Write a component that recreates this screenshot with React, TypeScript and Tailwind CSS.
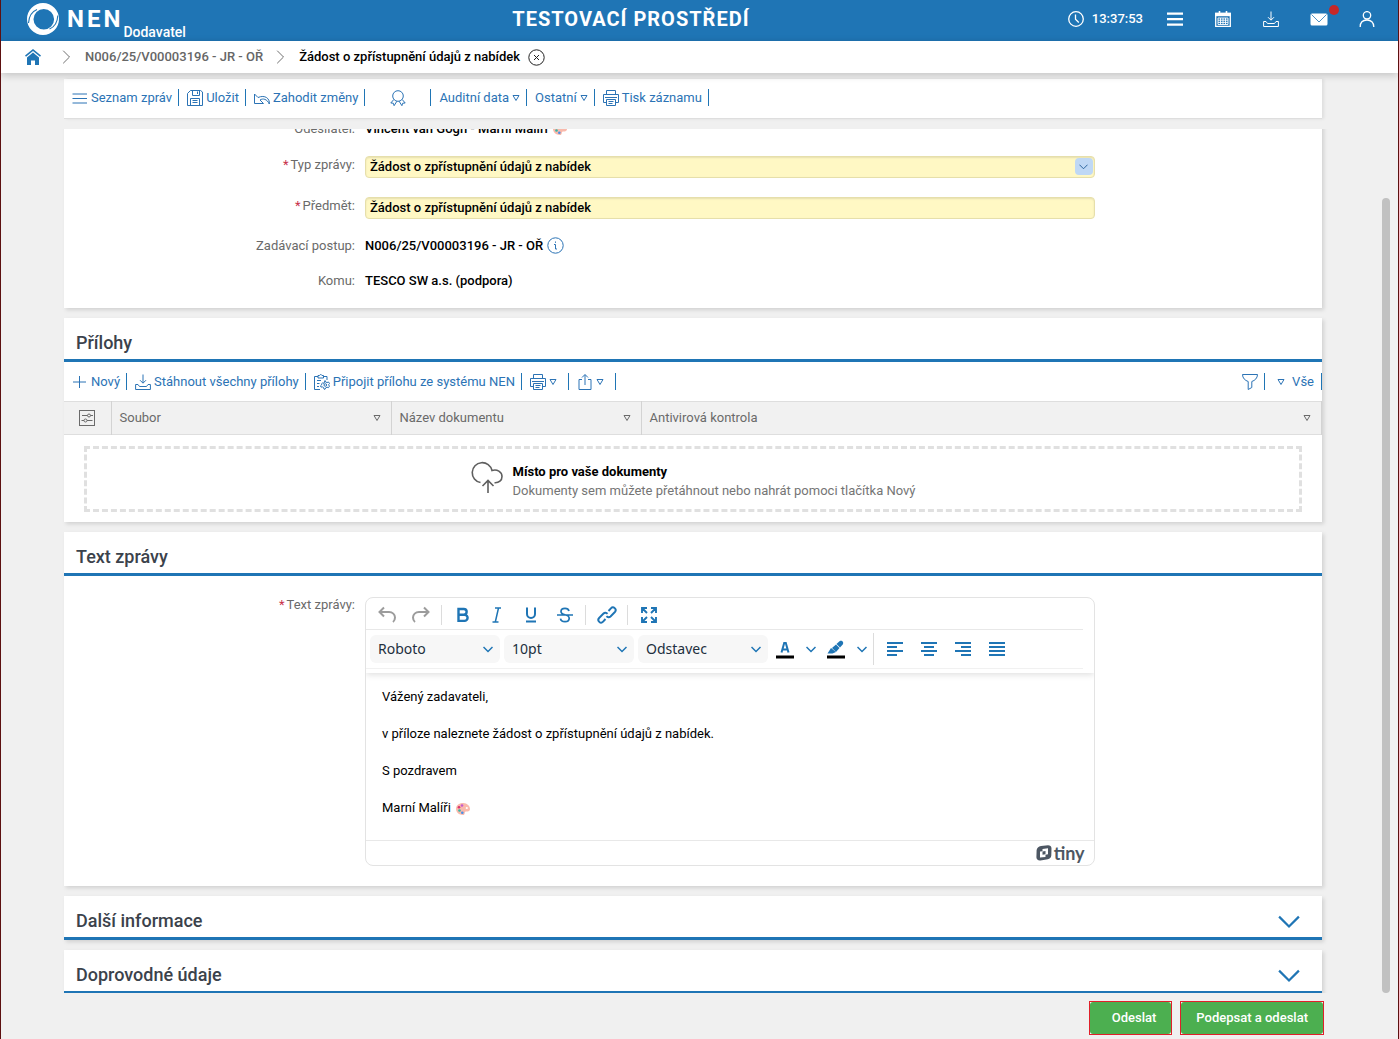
import { useEffect, useRef, useState } from "react";
import type { ReactNode } from "react";
import clsx from "clsx";

type IconProps = { className?: string };

const line = {
  viewBox: "0 0 16 16",
  fill: "none",
  stroke: "currentColor",
  strokeWidth: 1,
  "aria-hidden": true,
} as const;

/* Icons */

const Triangle = ({ className = "" }: IconProps) => (
  <svg viewBox="0 0 8 8" fill="none" stroke="currentColor" className={clsx("h-2 w-2 shrink-0", className)} aria-hidden>
    <path d="M1 1.5h6L4 6.5z" />
  </svg>
);

const Chevron = ({ className = "" }: IconProps) => (
  <svg viewBox="0 0 10 10" fill="none" stroke="currentColor" className={className} aria-hidden>
    <path d="M0.5 3 5 7.5 9.5 3" />
  </svg>
);

const NenLogo = () => (
  <svg viewBox="0 0 32 32" className="h-8 w-8" aria-hidden>
    <path
      fill="#fff"
      fillRule="evenodd"
      d="M16 0a16 16 0 1 1 0 32 16 16 0 0 1 0-32zm.8 6a10.300 10.300 0 1 0 0 20.600 10.300 10.300 0 0 0 0-20.600z"
    />
    <path d="M1.500 20C2 13 5 8.500 10 6.500" fill="none" stroke="#1f75b5" strokeWidth="1.100" />
    <path d="M30.800 12.500c-.3 7-3.500 11.500-8.300 13.500" fill="none" stroke="#1f75b5" strokeWidth="1.100" />
  </svg>
);

const HomeIcon = () => (
  <svg viewBox="0 0 16 16" className="h-4 w-4" fill="#1f75b5" aria-hidden>
    <path d="M8 0 0 6.500l1 1.200L8 2l7 5.700 1-1.200z" />
    <path d="M8 3.600 2 8.500V16h4v-4.500h4V16h4V8.500z" />
  </svg>
);

const ClockIcon = () => (
  <svg {...line} className="h-4 w-4">
    <circle cx="8" cy="8" r="7.300" strokeWidth="1.300" />
    <path d="M7.500 3.500v4.700l3.300 3.300" strokeWidth="1.300" />
  </svg>
);

const MenuIcon = () => (
  <svg viewBox="0 0 16 16" className="h-4 w-4" fill="currentColor" aria-hidden>
    <path d="M0 1.500h16v2.200H0zM0 7h16v2.200H0zM0 12.500h16v2.200H0z" />
  </svg>
);

const CalendarIcon = () => (
  <svg {...line} className="h-4 w-4">
    <path d="M.7 2.500h14.600v12.800H.7z" strokeWidth="1.300" />
    <path d="M0 1.800h16v3.400H0z" fill="currentColor" stroke="none" />
    <path d="M4.500 0v3.500M11.500 0v3.500" strokeWidth="1.600" />
    <path d="M3 7h10v6.500H3zM3 9.200h10M3 11.400h10M5.500 7v6.500M8 7v6.500M10.500 7v6.500" strokeWidth=".9" />
  </svg>
);

const DownloadIcon = () => (
  <svg {...line} className="h-4 w-4 shrink-0">
    <path d="M8 .5v8.500M5 6.200 8 9.200l3-3" />
    <path d="M3 10.500H.6v5h14.800v-5H13M3 10.500l1.500 2h7l1.500-2" />
  </svg>
);

const MailIcon = () => (
  <svg viewBox="0 0 18 16" className="h-4 w-[18px]" aria-hidden>
    <rect x=".5" y="2.500" width="17" height="12" rx="1.500" fill="#fff" />
    <path d="m1.500 3.500 7.500 7.500 7.500-7.500" fill="none" stroke="#1f75b5" strokeWidth=".8" />
  </svg>
);

const UserIcon = () => (
  <svg {...line} className="h-4 w-4">
    <circle cx="8" cy="4.300" r="3.700" strokeWidth="1.300" />
    <path d="M1.200 16c0-4.500 2.800-7 6.800-7s6.800 2.500 6.800 7" strokeWidth="1.300" />
  </svg>
);

const ListIcon = () => (
  <svg {...line} className="h-4 w-4 shrink-0">
    <path d="M.5 4h14.500M.5 8.500h14.500M.5 13h14.500" />
  </svg>
);

const SaveIcon = () => (
  <svg {...line} className="h-4 w-4 shrink-0">
    <path d="M3.500.5h10l2 1.500v13.500H.5V3.500z" />
    <path d="M5.500.5v5h7v-5M10.500 1.500v2.500M3.500 15.500V8.500h9v7M5.500 10.500h5M5.500 12.500h5" />
  </svg>
);

const UndoCardIcon = () => (
  <svg {...line} className="h-4 w-4 shrink-0">
    <path d="M.5 4v9.500h9l-3.500-3.500C9 8 13 9 15.300 14c.7-5.500-4.300-9.500-11.300-6.500z" />
  </svg>
);

const SealIcon = () => (
  <svg {...line} className="h-4 w-4 shrink-0">
    <circle cx="8" cy="6" r="5.300" />
    <path d="M3.800 9.500.8 13l2.500.2.800 2.500 2.800-4.500M12.200 9.500l3 3.500-2.500.2-.8 2.500-2.800-4.500" />
  </svg>
);

const PrintIcon = () => (
  <svg {...line} className="h-4 w-4 shrink-0">
    <path d="M3.500 4.500v-4h9v4M3.500 12.500h-3v-8h15v8h-3M2 7.500h12" />
    <path d="M3.500 9.500h9v6h-9zM5.500 11.500h5M5.500 13.500h4" />
  </svg>
);

const PlusIcon = () => (
  <svg {...line} className="h-4 w-4 shrink-0">
    <path d="M7.500 2v12M1 8h13" />
  </svg>
);

const ClipboardIcon = () => (
  <svg {...line} className="h-4 w-4 shrink-0">
    <path d="M6 15.500H.5v-13H4M9.500 2.500H13V6M4 1.500h1.500C6 .2 7.500.2 8 1.500h1.500V4H4z" />
    <path d="M3 6.500h4M3 9.500h2.500M3 12.500h2" />
    <path d="m11 6.500.5 1.500 1.500.5 1.500-.5 1 1.500-1 1.300 1 1.300-1 1.500-1.500-.4-1.300.6-.7 1.500-1-.2-.5-1.700-1.200-.5-1.300.2-.5-1.300 1.200-1-.2-1 1-.8 1.500.3z" />
    <circle cx="11.300" cy="11" r="1.300" />
  </svg>
);

const ShareIcon = () => (
  <svg {...line} className="h-4 w-4 shrink-0">
    <path d="M5 5.500H2v10h12v-10h-3M8 11V.8M5 3.500 8 .5l3 3" />
  </svg>
);

const FilterIcon = () => (
  <svg {...line} className="h-4 w-4 shrink-0">
    <path d="M.5.500h15C15.500 4 13 6.500 9.800 7.500v6L6.200 15.500v-8C3 6.500.5 4 .5.500z" />
  </svg>
);

const SlidersIcon = () => (
  <svg {...line} className="h-4 w-4">
    <rect x=".5" y=".5" width="15" height="15" />
    <path d="M3 5.500h5.500M11.500 5.500H14M2.500 10.500H5M8 10.500h5.500" />
    <circle cx="10" cy="5.500" r="1.500" />
    <circle cx="6.500" cy="10.500" r="1.500" />
  </svg>
);

const CloudIcon = () => (
  <svg viewBox="0 0 32 32" className="h-8 w-8 text-[#5f5f5f]" fill="none" stroke="currentColor" strokeWidth="1.600" aria-hidden>
    <path d="M9.500 21.500a10 10 0 1 1 11.500-12c5-1.800 10 1.500 10 6 0 4-3 6.500-7.500 6.200" />
    <path d="M17 32V20M11.500 25l5.500-5.500L22.500 25" />
  </svg>
);

const Palette = () => (
  <svg viewBox="0 0 14 12" className="ml-[2px] inline h-3 w-[14px]" role="img" aria-label="paleta">
    <path d="M6 0C2.500.3 0 3 0 6s3 6 7 6c2 0 1.500-2 2-3s5 .5 5-3S10.500-.3 6 0z" fill="#f9b9ab" />
    <circle cx="6" cy="2.500" r="1.300" fill="#c45ad0" />
    <circle cx="3" cy="4.300" r="1.300" fill="#d8366f" />
    <circle cx="3.500" cy="7.500" r="1.300" fill="#35b5a5" />
    <circle cx="6.300" cy="9.700" r="1.300" fill="#4a90e8" />
    <circle cx="10.800" cy="5" r="1.100" fill="#fff" />
  </svg>
);

const TinyLogo = () => (
  <svg viewBox="0 0 16 16" className="h-4 w-4" aria-hidden>
    <path
      fill="#4d5763"
      fillRule="evenodd"
      d="M5 1 12 .3c2 0 3.500 1.200 3.500 3.200l-.2 7c-.2 2-1.500 3.500-3.500 3.800L4.500 15.500C2 15.800.4 14.500.4 12.300l.2-7C.8 3 2.500 1.300 5 1zm1.500 3L12 3.300v6L9.500 9.700v2.200L4 12.500V6.500l2.500-.3z"
    />
    <path d="M6.500 6.500 9.500 6v3.200l-3 .5z" fill="#4d5763" />
  </svg>
);

/* Toolbar pieces */

type ToolProps = { icon?: ReactNode; children?: ReactNode; menu?: boolean; label?: string; className?: string };

function Tool({ icon, children, menu, label, className = "pl-2 pr-[6px]" }: ToolProps) {
  return (
    <button
      type="button"
      aria-label={label}
      className={clsx("flex h-[17px] items-center gap-[3px] border-r border-[#1f75b5] whitespace-nowrap text-[#2b73b5]", className)}
    >
      {icon}
      {children}
      {menu && <Triangle />}
    </button>
  );
}

function Card({ children }: { children: ReactNode }) {
  return <section className="mb-[10px] bg-white shadow-[2px_2px_4px_rgba(0,0,0,.13)]">{children}</section>;
}

function CardTitle({ children, collapsed }: { children: ReactNode; collapsed?: boolean }) {
  return (
    <div className="flex h-11 items-center justify-between border-b-3 border-[#1f75b5] pt-2 pr-[22px] pl-3">
      <h2 className="text-lg font-medium text-[#3b424b]">{children}</h2>
      {collapsed && (
        <button type="button" aria-label="Rozbalit" className="text-[#1f75b5]">
          <Chevron className="h-[22px] w-[22px]" />
        </button>
      )}
    </div>
  );
}

type RowProps = { label: string; id?: string; required?: boolean; children: ReactNode; className?: string };

function Row({ label, id, required, children, className = "h-[35px] items-center" }: RowProps) {
  return (
    <div className={clsx("flex", className)}>
      <label htmlFor={id} className={clsx("w-[301px] shrink-0 pr-[10px] text-right leading-4 text-[#6a6a6a]", required && "pb-1")}>
        {required && <span className="mr-[2px] text-[#c8324a]">*</span>}
        {label}
      </label>
      <div className="w-[58%]">{children}</div>
    </div>
  );
}

/* Editor */

type EditorIconProps = { label: string; children: ReactNode; muted?: boolean };

function EditorButton({ label, children, muted }: EditorIconProps) {
  return (
    <button
      type="button"
      aria-label={label}
      className={clsx("flex h-7 w-[34px] items-center justify-center", muted ? "text-[#9c9c9c]" : "text-[#1f75b5]")}
    >
      <svg viewBox="0 0 24 24" className="h-6 w-6" fill="none" stroke="currentColor" strokeWidth="2" aria-hidden>
        {children}
      </svg>
    </button>
  );
}

function EditorSelect({ label, value }: { label: string; value: string }) {
  return (
    <div className="relative">
      <select
        aria-label={label}
        className="h-7 w-[130px] appearance-none rounded-md bg-[#f7f7f7] px-2 font-['Noto_Sans',sans-serif] text-sm text-[#222f3e]"
      >
        <option>{value}</option>
      </select>
      <Chevron className="pointer-events-none absolute top-[9px] right-[7px] h-[10px] w-[10px] stroke-[1.5] text-[#1f75b5]" />
    </div>
  );
}

function SplitArrow({ label }: { label: string }) {
  return (
    <button type="button" aria-label={label} className="flex w-[17px] items-center justify-center text-[#1f75b5]">
      <Chevron className="h-[10px] w-[10px] stroke-[1.5]" />
    </button>
  );
}

function AlignIcon({ widths }: { widths: [number, number][] }) {
  return (
    <>
      {widths.map(([x, w], i) => (
        <path key={i} d={`M${x} ${6 + i * 4}h${w}`} />
      ))}
    </>
  );
}

const group = "flex items-center border-r border-[#dcdcdc] pl-1 pr-[3px]";

function Editor() {
  return (
    <div className="overflow-hidden rounded-lg border border-[#e3e3e3]">
      <div className="pb-1 shadow-[0_2px_6px_rgba(0,0,0,.12)]">
        <div className="mr-[11px] flex h-8 items-center border-b border-[#e8e8e8] pt-1 pb-[1px]">
          <div className={clsx(group, "h-5")}>
            <EditorButton label="Zpět" muted>
              <path d="M9 4.500 4.500 9 9 13.500M5 9h9c3.500 0 6 2.500 6 5.500 0 2-.8 3.500-2 4.500" />
            </EditorButton>
            <EditorButton label="Znovu" muted>
              <path d="M15 4.500 19.500 9 15 13.500M19 9h-9c-3.500 0-6 2.500-6 5.500 0 2 .8 3.500 2 4.500" />
            </EditorButton>
          </div>
          <div className={clsx(group, "h-5")}>
            <EditorButton label="Tučné">
              <path d="M7.500 6h5.300a2.800 2.800 0 0 1 0 5.700H7.500zM7.500 11.700h6a3.100 3.100 0 0 1 0 6.200h-6z" strokeWidth="2.400" />
            </EditorButton>
            <EditorButton label="Kurzíva">
              <path d="M10 5h6M7.500 19h6M13.500 5 10.300 19" strokeWidth="1.500" />
            </EditorButton>
            <EditorButton label="Podtržené">
              <path d="M8 4.500V11a4 4 0 0 0 8 0V4.500M7 18.500h10" />
            </EditorButton>
            <EditorButton label="Přeškrtnuté">
              <path d="M16 8c-.4-1.800-2-2.700-4-2.700S8 6.300 8 8.500s2 2.800 4 3.300 4.200 1.200 4.200 3.500-2 3.400-4.200 3.400-4.200-1-4.500-3M4 12h16" strokeWidth="1.700" />
            </EditorButton>
          </div>
          <div className={clsx(group, "h-5")}>
            <EditorButton label="Odkaz">
              <path d="m10.500 16-2.400 2.700a2.700 2.700 0 0 1-4-3.700L8.500 10.500a2.700 2.700 0 0 1 4 .3M13.500 8l2.400-2.700a2.700 2.700 0 0 1 4 3.700L15.500 13.500a2.700 2.700 0 0 1-4-.3" strokeWidth="1.900" />
            </EditorButton>
          </div>
          <div className="pl-1">
            <EditorButton label="Celá obrazovka">
              <path d="M5 10V5h5M14 5h5v5M19 14v5h-5M10 19H5v-5M5 5l5 5M19 5l-5 5M19 19l-5-5M5 19l5-5" strokeWidth="1.900" />
            </EditorButton>
          </div>
        </div>

        <div className="mr-[11px] flex h-[39px] items-center border-b border-[#f1f1f1]">
          <div className={clsx(group, "h-8")}>
            <div className="flex gap-1">
              <EditorSelect label="Písmo" value="Roboto" />
              <EditorSelect label="Velikost" value="10pt" />
              <EditorSelect label="Formát" value="Odstavec" />
            </div>
            <EditorButton label="Barva textu">
              <path d="m8.500 15.500 2.700-9.500h1.600l2.700 9.500M9.500 12.500h5" />
              <path d="M3 20h18" stroke="#000" strokeWidth="3" />
            </EditorButton>
            <SplitArrow label="Vybrat barvu textu" />
            <EditorButton label="Barva pozadí">
              <path d="M3.500 16.500 7 11l5 4-3.500 1.500z" fill="currentColor" stroke="none" />
              <path d="m8 11 4-3.500 3.500 3.500-3.500 4z" fill="currentColor" stroke="none" />
              <path d="m12.500 7 3-2.800c2.300-1.500 4.800 1 3.200 3.200L16 10.500z" fill="currentColor" stroke="none" />
              <path d="M3 20h18" stroke="#000" strokeWidth="3" />
            </EditorButton>
            <SplitArrow label="Vybrat barvu pozadí" />
          </div>
          <div className="flex pl-1">
            <EditorButton label="Zarovnat vlevo">
              <AlignIcon widths={[[4, 16], [4, 10], [4, 16], [4, 10]]} />
            </EditorButton>
            <EditorButton label="Na střed">
              <AlignIcon widths={[[4, 16], [7, 10], [4, 16], [7, 10]]} />
            </EditorButton>
            <EditorButton label="Zarovnat vpravo">
              <AlignIcon widths={[[4, 16], [10, 10], [4, 16], [10, 10]]} />
            </EditorButton>
            <EditorButton label="Do bloku">
              <AlignIcon widths={[[4, 16], [4, 16], [4, 16], [4, 16]]} />
            </EditorButton>
          </div>
        </div>
      </div>

      <div className="h-[167px] space-y-[17px] px-4 pt-[14px] leading-5 text-black">
        <p>Vážený zadavateli,</p>
        <p>v příloze naleznete žádost o zpřístupnění údajů z nabídek.</p>
        <p>S pozdravem</p>
        <p>
          Marní Malíři <Palette />
        </p>
      </div>

      <div className="flex h-[25px] items-center justify-end gap-[2px] border-t border-[#e8e8e8] pr-[9px] text-[#4d5763]">
        <TinyLogo />
        <span className="font-[Lato,sans-serif] text-lg leading-4 font-bold">tiny</span>
      </div>
    </div>
  );
}

const columns = [
  { name: "Soubor", width: "w-[280px]" },
  { name: "Název dokumentu", width: "w-[250px]" },
  { name: "Antivirová kontrola", width: "" },
];

const field = "h-[22px] w-full rounded border border-[#e6dfab] bg-[#fff8c4] px-1 font-medium text-black shadow-[inset_0_1px_2px_rgba(0,0,0,.1)]";

export default function App() {
  const scroller = useRef<HTMLDivElement>(null);
  const [subject, setSubject] = useState("Žádost o zpřístupnění údajů z nabídek");

  useEffect(() => {
    if (scroller.current) scroller.current.scrollTop = 28;
  }, []);

  return (
    <div className="flex h-screen flex-col overflow-hidden border-x border-[#5c1010] bg-[#f0f0f0] font-[Roboto,sans-serif] text-[13px] leading-5">
      {/* Header */}
      <header className="flex h-[41px] shrink-0 items-center justify-between bg-[#1f75b5] pr-[7px] pb-1 pl-[26px] text-white">
        <div className="flex h-full items-center pr-2">
          <NenLogo />
          <span className="ml-2 text-2xl font-bold tracking-[3px]">NEN</span>
          <span className="self-end text-sm leading-[10px] font-medium">Dodavatel</span>
        </div>
        <h1 className="text-xl font-bold tracking-[1px]">TESTOVACÍ PROSTŘEDÍ</h1>
        <div className="flex items-center">
          <ClockIcon />
          <time className="mr-2 ml-2 font-medium">13:37:53</time>
          <button type="button" aria-label="Menu" className="flex w-12 justify-center"><MenuIcon /></button>
          <button type="button" aria-label="Kalendář" className="flex w-12 justify-center"><CalendarIcon /></button>
          <button type="button" aria-label="Stažené soubory" className="flex w-12 justify-center"><DownloadIcon /></button>
          <button type="button" aria-label="Zprávy" className="relative flex w-12 justify-center">
            <MailIcon />
            <span className="absolute -top-[6px] right-1 h-[10px] w-[10px] rounded-full bg-[#c62828]" />
          </button>
          <button type="button" aria-label="Uživatel" className="flex w-12 justify-center"><UserIcon /></button>
        </div>
      </header>

      {/* Breadcrumbs */}
      <nav className="relative z-10 flex h-8 shrink-0 items-center bg-white pl-6 shadow-[0_2px_8px_rgba(0,0,0,.2)]">
        <a href="#" aria-label="Domů"><HomeIcon /></a>
        <Chevron className="mr-3 ml-[18px] h-[14px] w-[14px] -rotate-90 stroke-[0.6] text-[#555]" />
        <a href="#" className="font-medium text-[#666]">N006/25/V00003196 - JR - OŘ</a>
        <Chevron className="mr-3 ml-[10px] h-[14px] w-[14px] -rotate-90 stroke-[0.6] text-[#555]" />
        <span className="font-medium text-black">Žádost o zpřístupnění údajů z nabídek</span>
        <button type="button" aria-label="Zavřít" className="ml-2">
          <svg viewBox="0 0 17 17" className="h-[17px] w-[17px]" fill="none" stroke="#222" aria-hidden>
            <circle cx="8.500" cy="8.500" r="7.700" />
            <path d="m6 6 5 5M11 6l-5 5" />
          </svg>
        </button>
      </nav>

      {/* Record toolbar */}
      <div className="mt-[6px] mr-[76px] mb-[10px] ml-[63px] flex h-10 shrink-0 items-center border-b border-[#dedede] bg-white pb-[2px] shadow-[2px_0_3px_rgba(0,0,0,.08)]">
        <Tool icon={<ListIcon />}>Seznam zpráv</Tool>
        <Tool icon={<SaveIcon />}>Uložit</Tool>
        <Tool icon={<UndoCardIcon />}>Zahodit změny</Tool>
        <Tool icon={<SealIcon />} label="Certifikát" className="pl-[25px] pr-6" />
        <Tool menu>Auditní data</Tool>
        <Tool menu>Ostatní</Tool>
        <Tool icon={<PrintIcon />}>Tisk záznamu</Tool>
      </div>

      {/* Record */}
      <div className="flex min-h-0 flex-1">
        <div ref={scroller} className="flex-1 overflow-hidden pr-[60px] pl-[63px]">
          <Card>
            <div className="py-[10px]">
              <Row label="Odesílatel:">
                <span className="font-medium text-black">Vincent van Gogh - Marní Malíři <Palette /></span>
              </Row>
              <Row label="Typ zprávy:" id="typ" required className="h-[41px] items-center">
                <div className="relative flex">
                  <select id="typ" className={clsx(field, "appearance-none")}>
                    <option>Žádost o zpřístupnění údajů z nabídek</option>
                  </select>
                  <span className="pointer-events-none absolute top-[2px] right-[2px] flex h-[17px] w-[18px] items-center justify-center rounded bg-[#bfd8f5] text-[#1f5b95]">
                    <Chevron className="h-[9px] w-[9px]" />
                  </span>
                </div>
              </Row>
              <Row label="Předmět:" id="predmet" required className="h-[41px] items-center">
                <input id="predmet" value={subject} onChange={(e) => setSubject(e.target.value)} className={clsx(field, "block")} />
              </Row>
              <Row label="Zadávací postup:">
                <div className="flex items-center gap-1 font-medium text-black">
                  N006/25/V00003196 - JR - OŘ
                  <svg viewBox="0 0 17 17" className="h-[17px] w-[17px] text-[#2b73b5]" fill="none" stroke="currentColor" aria-hidden>
                    <circle cx="8.500" cy="8.500" r="7.700" />
                    <path d="M7 7.500h1.500v4.500h1.500M8.500 4.500v1.300" />
                  </svg>
                </div>
              </Row>
              <Row label="Komu:">
                <span className="font-medium text-black">TESCO SW a.s. (podpora)</span>
              </Row>
            </div>
          </Card>

          <Card>
            <CardTitle>Přílohy</CardTitle>
            <div className="flex h-[39px] items-center">
              <Tool icon={<PlusIcon />}>Nový</Tool>
              <Tool icon={<DownloadIcon />}>Stáhnout všechny přílohy</Tool>
              <Tool icon={<ClipboardIcon />}>Připojit přílohu ze systému NEN</Tool>
              <Tool icon={<PrintIcon />} menu label="Tisk" className="pl-2 pr-[11px]" />
              <Tool icon={<ShareIcon />} menu label="Export" className="pl-2 pr-[11px]" />
              <div className="ml-auto flex">
                <Tool icon={<FilterIcon />} label="Filtr" />
                <Tool icon={<Triangle className="mr-1" />} className="pl-3 pr-[7px]">Vše</Tool>
              </div>
            </div>
            <table className="w-full table-fixed border-collapse bg-[#f1f1f1] text-[#6a6a6a]">
              <thead>
                <tr className="h-[33px] border-y border-[#dedede]">
                  <th className="w-[47px] border-r border-[#d3d3d3]">
                    <button type="button" aria-label="Nastavení sloupců" className="block pl-[15px]"><SlidersIcon /></button>
                  </th>
                  {columns.map((column) => (
                    <th key={column.name} className={clsx("border-r border-[#d3d3d3] font-normal", column.width)}>
                      <div className="flex items-center justify-between pr-[10px] pl-2">
                        {column.name}
                        <Triangle />
                      </div>
                    </th>
                  ))}
                </tr>
              </thead>
            </table>
            <div className="px-5 pt-[11px] pb-[10px]">
              <div className="flex h-[66px] items-center justify-center gap-[10px] border-3 border-dashed border-[#e0e0e0]">
                <div className="pb-1">
                  <CloudIcon />
                </div>
                <div className="pt-1 leading-[19px]">
                  <p className="font-bold text-black">Místo pro vaše dokumenty</p>
                  <p className="text-[#757575]">Dokumenty sem můžete přetáhnout nebo nahrát pomoci tlačítka Nový</p>
                </div>
              </div>
            </div>
          </Card>

          <Card>
            <CardTitle>Text zprávy</CardTitle>
            <div className="pt-[21px] pb-5">
              <Row label="Text zprávy:" required className="items-start">
                <Editor />
              </Row>
            </div>
          </Card>

          <Card>
            <CardTitle collapsed>Další informace</CardTitle>
          </Card>
          <Card>
            <CardTitle collapsed>Doprovodné údaje</CardTitle>
          </Card>
        </div>

        {/* Scrollbar */}
        <div className="mr-2 flex w-2 flex-col">
          <div className="basis-[8%]" />
          <div className="flex-1 rounded-full bg-[#c1c1c1]" />
        </div>
      </div>

      {/* Actions */}
      <footer className="flex h-[46px] shrink-0 justify-end gap-2 pt-2 pr-[74px] pb-1 font-medium text-white">
        <div className="flex border border-[#e0202a] bg-white">
          <button type="button" className="rounded-[3px] bg-[#4caf50] pr-[15px] pl-[22px]">Odeslat</button>
        </div>
        <div className="flex border border-[#e0202a] bg-white">
          <button type="button" className="rounded-[3px] bg-[#4caf50] px-[15px]">Podepsat a odeslat</button>
        </div>
      </footer>
    </div>
  );
}
